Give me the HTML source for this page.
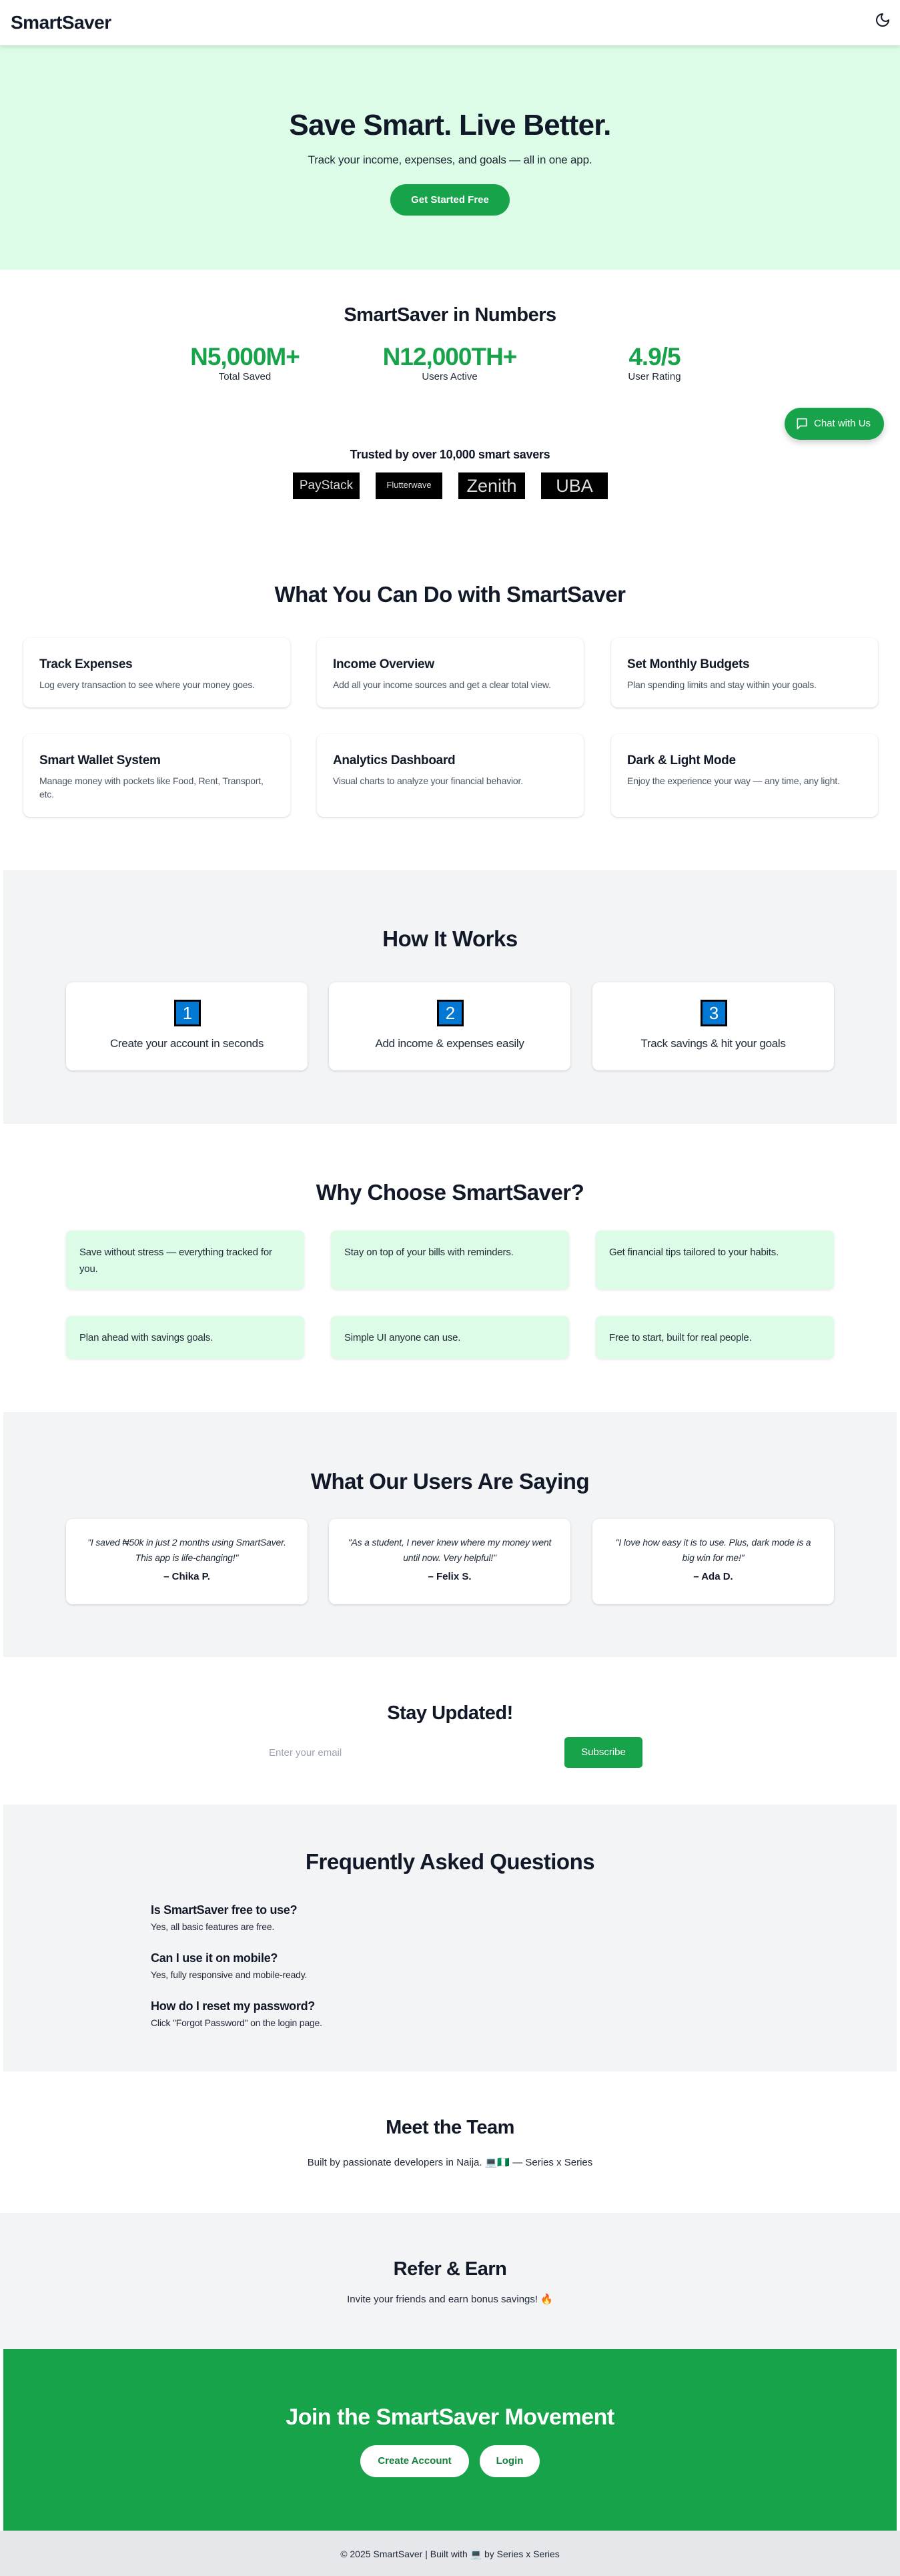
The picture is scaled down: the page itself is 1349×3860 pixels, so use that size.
<!DOCTYPE html>
<html><head><meta charset="utf-8"><style>
*{margin:0;padding:0;box-sizing:border-box}
body{width:1349px;height:3860px;position:relative;font-family:"Liberation Sans",Arial,sans-serif;color:#111827;background:#fff;overflow:hidden}
.a{position:absolute}
.c{position:absolute;left:0;right:0;text-align:center}
.h2{font-size:33px;font-weight:bold;line-height:44px;letter-spacing:-0.5px}
.card{position:absolute;background:#fff;border-radius:10px;box-shadow:0 1px 4px rgba(0,0,0,.12),0 1px 2px rgba(0,0,0,.06)}
.card h3{font-size:19px;font-weight:bold;position:absolute;left:24px;top:29px;letter-spacing:-0.3px}
.card p{font-size:14px;color:#4b5563;position:absolute;left:24px;right:24px;top:60px;line-height:20px;letter-spacing:-0.2px}
.why{position:absolute;background:#dcfce7;border-radius:8px;box-shadow:0 1px 4px rgba(0,0,0,.1);padding:20px 20px;font-size:15px;line-height:25px;color:#1f2937;width:357px;letter-spacing:-0.2px}
.step{position:absolute;top:1472px;width:362px;height:132px}
.num{position:absolute;left:162px;top:26px;width:40px;height:40px;background:#0078d4;border:3px solid #000;color:#fff;font-size:26px;line-height:34px;text-align:center}
.step p{position:absolute;left:0;right:0;top:82px;text-align:center;font-size:17px;color:#1f2937;letter-spacing:-0.3px}
.test{position:absolute;top:2276px;width:362px;height:128px;text-align:center}
.test i{display:block;margin:24px 28px 0;font-size:14px;line-height:23px;color:#1f2937;letter-spacing:-0.2px}
.test b{display:block;margin-top:8px;font-size:15px;font-weight:600}
.logo{position:absolute;top:708px;width:100px;height:40px;background:#000;color:#ddd;font-weight:300;text-align:center}
.faqq{position:absolute;left:226px;font-size:18px;font-weight:600;letter-spacing:-0.3px}
.faqa{position:absolute;left:226px;font-size:14px;color:#1f2937;letter-spacing:-0.2px}
</style></head><body>
<div class="a" style="left:0;top:0;width:1349px;height:68px;background:#fff;box-shadow:0 2px 6px rgba(0,0,0,.15);z-index:2"></div>
<div class="a" style="left:16px;top:18px;font-size:28px;font-weight:bold;z-index:3;letter-spacing:-0.5px">SmartSaver</div>
<svg class="a" style="left:1311px;top:18px;z-index:3" width="24" height="24" viewBox="0 0 24 24" fill="none" stroke="#111827" stroke-width="2" stroke-linecap="round" stroke-linejoin="round"><path d="M12 3a6 6 0 0 0 9 9 9 9 0 1 1-9-9Z"/></svg>
<div class="a" style="left:0;top:68px;width:1349px;height:336px;background:#dcfce7"></div>
<div class="c" style="top:160px;font-size:44px;font-weight:bold;line-height:56px;letter-spacing:-0.8px">Save Smart. Live Better.</div>
<div class="c" style="top:228px;font-size:17px;line-height:24px;color:#1f2937;letter-spacing:-0.2px">Track your income, expenses, and goals — all in one app.</div>
<div class="a" style="left:585px;top:276px;width:179px;height:47px;background:#16a34a;border-radius:24px;color:#fff;font-size:15px;font-weight:bold;text-align:center;line-height:47px">Get Started Free</div>
<div class="c" style="top:453px;font-size:29px;font-weight:bold;line-height:38px;letter-spacing:-0.5px">SmartSaver in Numbers</div>
<div class="a" style="left:217px;width:300px;top:512px;text-align:center;font-size:37px;font-weight:bold;color:#16a34a;line-height:46px;letter-spacing:-1px">N5,000M+</div>
<div class="a" style="left:524px;width:300px;top:512px;text-align:center;font-size:37px;font-weight:bold;color:#16a34a;line-height:46px;letter-spacing:-1px">N12,000TH+</div>
<div class="a" style="left:831px;width:300px;top:512px;text-align:center;font-size:37px;font-weight:bold;color:#16a34a;line-height:46px;letter-spacing:-1px">4.9/5</div>
<div class="a" style="left:217px;width:300px;top:556px;text-align:center;font-size:15px;color:#1f2937">Total Saved</div>
<div class="a" style="left:524px;width:300px;top:556px;text-align:center;font-size:15px;color:#1f2937">Users Active</div>
<div class="a" style="left:831px;width:300px;top:556px;text-align:center;font-size:15px;color:#1f2937">User Rating</div>
<div class="a" style="left:1176px;top:611px;width:149px;height:48px;background:#16a34a;border-radius:24px;box-shadow:0 4px 10px rgba(0,0,0,.2);color:#fff;font-size:15px;line-height:48px;padding-left:44px;z-index:5">Chat with Us
<svg class="a" style="left:16px;top:14px" width="20" height="20" viewBox="0 0 24 24" fill="none" stroke="#fff" stroke-width="2" stroke-linejoin="round"><path d="M4 3h16v13H9l-5 5V3z"/></svg></div>
<div class="c" style="top:669px;font-size:18px;font-weight:600;line-height:24px;letter-spacing:-0.3px">Trusted by over 10,000 smart savers</div>
<div class="logo" style="left:439px;font-size:19px;line-height:40px">PayStack</div>
<div class="logo" style="left:563px;font-size:13px;line-height:38px">Flutterwave</div>
<div class="logo" style="left:687px;font-size:27px;line-height:40px">Zenith</div>
<div class="logo" style="left:811px;font-size:27px;line-height:40px">UBA</div>
<div class="c h2" style="top:869px">What You Can Do with SmartSaver</div>
<div class="card" style="left:35px;top:956px;width:400px;height:104px"><h3>Track Expenses</h3><p>Log every transaction to see where your money goes.</p></div>
<div class="card" style="left:475px;top:956px;width:400px;height:104px"><h3>Income Overview</h3><p>Add all your income sources and get a clear total view.</p></div>
<div class="card" style="left:916px;top:956px;width:400px;height:104px"><h3>Set Monthly Budgets</h3><p>Plan spending limits and stay within your goals.</p></div>
<div class="card" style="left:35px;top:1100px;width:400px;height:124px"><h3>Smart Wallet System</h3><p>Manage money with pockets like Food, Rent, Transport, etc.</p></div>
<div class="card" style="left:475px;top:1100px;width:400px;height:124px"><h3>Analytics Dashboard</h3><p>Visual charts to analyze your financial behavior.</p></div>
<div class="card" style="left:916px;top:1100px;width:400px;height:124px"><h3>Dark &amp; Light Mode</h3><p>Enjoy the experience your way — any time, any light.</p></div>
<div class="a" style="left:5px;top:1304px;width:1339px;height:380px;background:#f3f4f6"></div>
<div class="c h2" style="top:1385px">How It Works</div>
<div class="card step" style="left:99px"><div class="num">1</div><p>Create your account in seconds</p></div>
<div class="card step" style="left:493px"><div class="num">2</div><p>Add income &amp; expenses easily</p></div>
<div class="card step" style="left:888px"><div class="num">3</div><p>Track savings &amp; hit your goals</p></div>
<div class="c h2" style="top:1765px">Why Choose SmartSaver?</div>
<div class="why" style="left:99px;top:1844px;height:88px">Save without stress — everything tracked for you.</div>
<div class="why" style="left:496px;top:1844px;height:88px">Stay on top of your bills with reminders.</div>
<div class="why" style="left:893px;top:1844px;height:88px">Get financial tips tailored to your habits.</div>
<div class="why" style="left:99px;top:1972px;height:64px">Plan ahead with savings goals.</div>
<div class="why" style="left:496px;top:1972px;height:64px">Simple UI anyone can use.</div>
<div class="why" style="left:893px;top:1972px;height:64px">Free to start, built for real people.</div>
<div class="a" style="left:5px;top:2116px;width:1339px;height:367px;background:#f3f4f6"></div>
<div class="c h2" style="top:2198px">What Our Users Are Saying</div>
<div class="card test" style="left:99px"><i>"I saved ₦50k in just 2 months using SmartSaver. This app is life-changing!"</i><b>– Chika P.</b></div>
<div class="card test" style="left:493px"><i>"As a student, I never knew where my money went until now. Very helpful!"</i><b>– Felix S.</b></div>
<div class="card test" style="left:888px"><i>"I love how easy it is to use. Plus, dark mode is a big win for me!"</i><b>– Ada D.</b></div>
<div class="c" style="top:2549px;font-size:29px;font-weight:bold;line-height:36px;letter-spacing:-0.5px">Stay Updated!</div>
<div class="a" style="left:403px;top:2618px;font-size:15px;color:#9ca3af">Enter your email</div>
<div class="a" style="left:846px;top:2603px;width:117px;height:46px;background:#16a34a;border-radius:5px;color:#fff;font-size:15px;line-height:46px;text-align:center">Subscribe</div>
<div class="a" style="left:5px;top:2704px;width:1339px;height:400px;background:#f3f4f6"></div>
<div class="c h2" style="top:2768px">Frequently Asked Questions</div>
<div class="faqq" style="top:2852px">Is SmartSaver free to use?</div>
<div class="faqa" style="top:2879px">Yes, all basic features are free.</div>
<div class="faqq" style="top:2924px">Can I use it on mobile?</div>
<div class="faqa" style="top:2951px">Yes, fully responsive and mobile-ready.</div>
<div class="faqq" style="top:2996px">How do I reset my password?</div>
<div class="faqa" style="top:3023px">Click "Forgot Password" on the login page.</div>
<div class="c" style="top:3170px;font-size:29px;font-weight:bold;line-height:36px;letter-spacing:-0.5px">Meet the Team</div>
<div class="c" style="top:3231px;font-size:15px;line-height:20px;color:#1f2937">Built by passionate developers in Naija. 💻🇳🇬 — Series x Series</div>
<div class="a" style="left:0;top:3316px;width:1349px;height:204px;background:#f3f4f6"></div>
<div class="c" style="top:3382px;font-size:29px;font-weight:bold;line-height:36px;letter-spacing:-0.5px">Refer &amp; Earn</div>
<div class="c" style="top:3436px;font-size:15px;line-height:20px;color:#1f2937">Invite your friends and earn bonus savings! 🔥</div>
<div class="a" style="left:5px;top:3520px;width:1339px;height:272px;background:#16a34a"></div>
<div class="c" style="top:3599px;font-size:34px;font-weight:bold;line-height:46px;color:#fff;letter-spacing:-0.5px">Join the SmartSaver Movement</div>
<div class="a" style="left:540px;top:3664px;width:163px;height:48px;background:#fff;border-radius:24px;color:#15803d;font-weight:bold;font-size:15px;line-height:48px;text-align:center">Create Account</div>
<div class="a" style="left:719px;top:3664px;width:90px;height:48px;background:#fff;border-radius:24px;color:#15803d;font-weight:bold;font-size:15px;line-height:48px;text-align:center">Login</div>
<div class="a" style="left:0;top:3792px;width:1349px;height:68px;background:#e5e7eb"></div>
<div class="c" style="top:3818px;font-size:14px;line-height:18px;color:#1f2937">© 2025 SmartSaver | Built with 💻 by Series x Series</div>
</body></html>
